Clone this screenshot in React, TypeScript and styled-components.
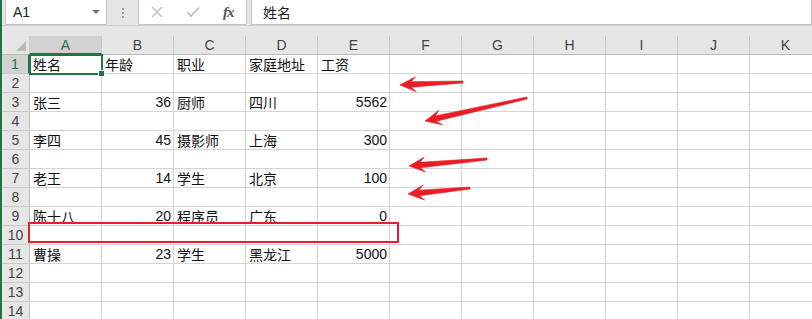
import React from "react";
import styled, { createGlobalStyle } from "styled-components";

const GlobalStyle = createGlobalStyle`
  html, body {
    margin: 0;
    padding: 0;
    background: #e6e6e6;
  }
`;

const green = "#217346";
const red = "#ea1c24";
const cellFont = `"Liberation Sans", "Noto Sans CJK SC", sans-serif`;

const Window = styled.div`
  position: relative;
  width: 812px;
  height: 319px;
  overflow: hidden;
  box-sizing: border-box;
  border-left: 2px solid ${green};
  background: #e6e6e6;
  font-family: ${cellFont};
`;

const FormulaBar = styled.div`
  display: flex;
  align-items: flex-start;
  height: 26px;
  border-bottom: 1px solid #d0d0d0;
  box-sizing: border-box;
`;

const Box = styled.div<{ $w?: number; $ml?: number; $grow?: boolean }>`
  display: flex;
  align-items: center;
  box-sizing: border-box;
  height: 25px;
  margin-left: ${(p) => p.$ml ?? 0}px;
  width: ${(p) => (p.$w ? `${p.$w}px` : "auto")};
  flex: ${(p) => (p.$grow ? 1 : "none")};
  background: #fff;
  border: 1px solid #c6c6c6;
  border-top: none;
`;

const NameText = styled.span`
  flex: 1;
  padding-left: 7px;
  font-size: 14px;
  color: #222;
`;

const Caret = styled.span`
  width: 0;
  height: 0;
  margin-right: 6px;
  border-left: 4px solid transparent;
  border-right: 4px solid transparent;
  border-top: 4px solid #777;
`;

const Grip = styled.div`
  width: 31px;
  height: 25px;
  display: flex;
  flex-direction: column;
  align-items: center;
  justify-content: center;
  gap: 2px;
  span {
    width: 2px;
    height: 2px;
    background: #9a9a9a;
  }
`;

const IconSlot = styled.div`
  width: 36px;
  display: flex;
  justify-content: center;
  align-items: center;
`;

const Fx = styled.span`
  font-family: "Liberation Serif", serif;
  font-style: italic;
  font-weight: bold;
  font-size: 15px;
  color: #555;
  letter-spacing: -1px;
`;

const FormulaText = styled.span`
  padding-left: 11px;
  font-size: 14px;
  color: #222;
`;

const Spacer = styled.div`
  height: 10px;
`;

const Grid = styled.div`
  display: grid;
  grid-template-columns: 28px repeat(11, 72px);
  grid-auto-rows: 19px;
  background: #fff;
`;

const Corner = styled.div`
  position: relative;
  background: #e6e6e6;
  border-right: 1px solid #c8c8c8;
  border-bottom: 1px solid #bababa;
  &::after {
    content: "";
    position: absolute;
    right: 3px;
    bottom: 3px;
    width: 0;
    height: 0;
    border-left: 10px solid transparent;
    border-bottom: 10px solid #b8b8b8;
  }
`;

const ColHead = styled.div<{ $sel?: boolean }>`
  box-sizing: border-box;
  display: flex;
  align-items: center;
  justify-content: center;
  font-size: 14px;
  color: ${(p) => (p.$sel ? green : "#444")};
  background: ${(p) => (p.$sel ? "#d2d2d2" : "#e6e6e6")};
  border-right: 1px solid #c8c8c8;
  border-bottom: ${(p) => (p.$sel ? `2px solid ${green}` : "1px solid #bababa")};
`;

const RowHead = styled.div<{ $sel?: boolean }>`
  box-sizing: border-box;
  display: flex;
  align-items: center;
  justify-content: center;
  font-size: 14px;
  color: ${(p) => (p.$sel ? green : "#444")};
  background: ${(p) => (p.$sel ? "#d2d2d2" : "#e6e6e6")};
  border-right: ${(p) => (p.$sel ? `2px solid ${green}` : "1px solid #bababa")};
  border-bottom: 1px solid #c8c8c8;
`;

const Cell = styled.div<{ $num?: boolean; $active?: boolean }>`
  position: relative;
  box-sizing: border-box;
  display: flex;
  align-items: center;
  justify-content: ${(p) => (p.$num ? "flex-end" : "flex-start")};
  padding: ${(p) => (p.$num ? "0 2px 0 0" : "0 0 0 3px")};
  font-size: 14px;
  color: #111;
  white-space: nowrap;
  border-right: 1px solid #d4d4d4;
  border-bottom: 1px solid #d4d4d4;
  ${(p) =>
    p.$active &&
    `
    z-index: 2;
    &::before {
      content: "";
      position: absolute;
      left: -1px; top: -1px; right: -2px; bottom: -2px;
      border: 2px solid ${green};
    }
    &::after {
      content: "";
      position: absolute;
      right: -4px; bottom: -4px;
      width: 5px; height: 5px;
      background: ${green};
      border: 1px solid #fff;
    }
  `}
`;

const Overlay = styled.svg`
  position: absolute;
  left: -2px;
  top: 0;
  pointer-events: none;
  z-index: 5;
`;

const Marker = styled.div`
  position: absolute;
  left: 26px;
  top: 222px;
  width: 371px;
  height: 21px;
  box-sizing: border-box;
  border: 2px solid ${red};
  z-index: 6;
`;

const columns = ["A", "B", "C", "D", "E", "F", "G", "H", "I", "J", "K"];

type Val = string | number | null;
const data: Record<number, Val[]> = {
  1: ["姓名", "年龄", "职业", "家庭地址", "工资"],
  3: ["张三", 36, "厨师", "四川", 5562],
  5: ["李四", 45, "摄影师", "上海", 300],
  7: ["老王", 14, "学生", "北京", 100],
  9: ["陈十八", 20, "程序员", "广东", 0],
  11: ["曹操", 23, "学生", "黑龙江", 5000],
};

function arrowPoints(
  tx: number,
  ty: number,
  hx: number,
  hy: number,
  headLen = 16,
  headW = 15,
  w0 = 2,
  w1 = 5.5
) {
  const dx = hx - tx;
  const dy = hy - ty;
  const len = Math.hypot(dx, dy);
  const ux = dx / len;
  const uy = dy / len;
  const nx = -uy;
  const ny = ux;
  const p = (x: number, y: number) => `${x.toFixed(1)},${y.toFixed(1)}`;
  const join = headLen * 0.7;
  return [
    p(tx + (nx * w0) / 2, ty + (ny * w0) / 2),
    p(hx - ux * join + (nx * w1) / 2, hy - uy * join + (ny * w1) / 2),
    p(hx - ux * headLen + (nx * headW) / 2, hy - uy * headLen + (ny * headW) / 2),
    p(hx, hy),
    p(hx - ux * headLen - (nx * headW) / 2, hy - uy * headLen - (ny * headW) / 2),
    p(hx - ux * join - (nx * w1) / 2, hy - uy * join - (ny * w1) / 2),
    p(tx - (nx * w0) / 2, ty - (ny * w0) / 2),
  ].join(" ");
}

const arrows = [
  { tx: 463, ty: 82, hx: 400, hy: 85 },
  { tx: 527, ty: 98, hx: 425, hy: 121 },
  { tx: 487, ty: 159, hx: 409, hy: 166 },
  { tx: 470, ty: 188, hx: 408, hy: 194 },
];

export default function App() {
  const rows = Array.from({ length: 14 }, (_, i) => i + 1);
  return (
    <>
      <GlobalStyle />
      <Window>
        <FormulaBar>
          <Box $w={102} $ml={3}>
            <NameText>A1</NameText>
            <Caret />
          </Box>
          <Grip>
            <span />
            <span />
            <span />
          </Grip>
          <Box $w={109}>
            <IconSlot>
              <svg width="12" height="12" viewBox="0 0 12 12">
                <path d="M1 1 L11 11 M11 1 L1 11" stroke="#bdbdbd" strokeWidth="1.4" fill="none" />
              </svg>
            </IconSlot>
            <IconSlot>
              <svg width="14" height="12" viewBox="0 0 14 12">
                <path d="M1 6 L5 10 L13 1.5" stroke="#bdbdbd" strokeWidth="1.6" fill="none" />
              </svg>
            </IconSlot>
            <IconSlot>
              <Fx>fx</Fx>
            </IconSlot>
          </Box>
          <Box $grow $ml={4}>
            <FormulaText>姓名</FormulaText>
          </Box>
        </FormulaBar>
        <Spacer />
        <Grid>
          <Corner />
          {columns.map((c) => (
            <ColHead key={c} $sel={c === "A"}>
              {c}
            </ColHead>
          ))}
          {rows.map((r) => (
            <React.Fragment key={r}>
              <RowHead $sel={r === 1}>{r}</RowHead>
              {columns.map((c, ci) => {
                const v = data[r]?.[ci] ?? null;
                return (
                  <Cell key={c} $num={typeof v === "number"} $active={r === 1 && ci === 0}>
                    {v}
                  </Cell>
                );
              })}
            </React.Fragment>
          ))}
        </Grid>
        <Marker />
        <Overlay width="812" height="319" viewBox="0 0 812 319">
          {arrows.map((a, i) => (
            <polygon
              key={i}
              points={arrowPoints(a.tx, a.ty, a.hx, a.hy)}
              fill={red}
              stroke={red}
              strokeWidth="0.6"
              strokeLinejoin="round"
            />
          ))}
        </Overlay>
      </Window>
    </>
  );
}
